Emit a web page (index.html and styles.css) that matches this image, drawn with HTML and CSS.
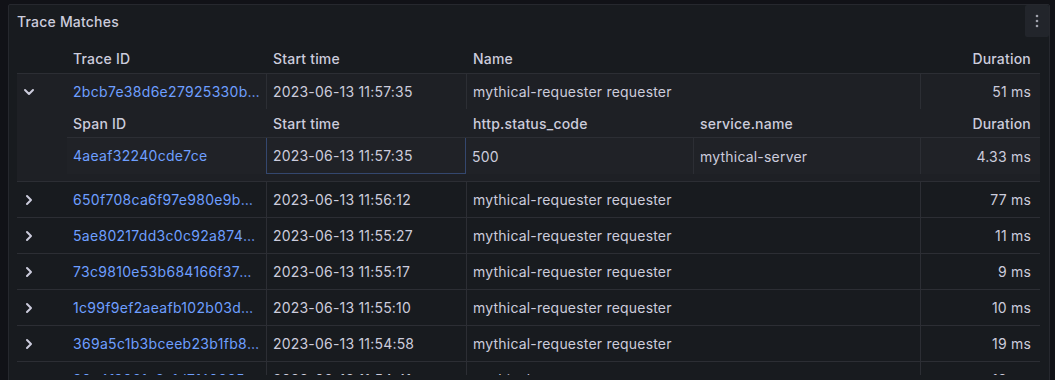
FILE: index.html
```html
<!DOCTYPE html>
<html lang="en">
<head>
  <meta charset="UTF-8">
  <title>Trace Matches</title>
  <link rel="stylesheet" href="styles.css">
</head>
<body>
  <div class="panel">
    <div class="panel-header">
      <h2 class="panel-title">Trace Matches</h2>
      <button class="panel-menu" title="Menu">
        <svg width="4" height="14" viewBox="0 0 4 14"><circle cx="2" cy="2" r="1.3"/><circle cx="2" cy="7" r="1.3"/><circle cx="2" cy="12" r="1.3"/></svg>
      </button>
    </div>

    <div class="panel-body">
      <div class="table">
        <div class="row head">
          <div class="cell"></div>
          <div class="cell">Trace ID</div>
          <div class="cell sep-blank">Start time</div>
          <div class="cell sep-blank">Name</div>
          <div class="cell sep-blank num">Duration</div>
        </div>

        <div class="trace expanded">
          <div class="row">
            <div class="cell toggle"><svg viewBox="0 0 16 16"><polyline points="4,6 8,10 12,6"/></svg></div>
            <div class="cell link">2bcb7e38d6e27925330bd4f1d9a1c02e</div>
            <div class="cell sep">2023-06-13 11:57:35</div>
            <div class="cell sep">mythical-requester requester</div>
            <div class="cell sep num">51 ms</div>
          </div>
          <div class="expansion">
            <div class="sub-row sub-head">
              <div class="cell">Span ID</div>
              <div class="cell sep-blank">Start time</div>
              <div class="cell sep-blank">http.status_code</div>
              <div class="cell sep-blank">service.name</div>
              <div class="cell sep-blank num">Duration</div>
            </div>
            <div class="sub-row">
              <div class="cell link">4aeaf32240cde7ce</div>
              <div class="cell focused">2023-06-13 11:57:35</div>
              <div class="cell">500</div>
              <div class="cell sep">mythical-server</div>
              <div class="cell sep num">4.33 ms</div>
            </div>
          </div>
        </div>

        <div class="trace">
          <div class="row">
            <div class="cell toggle"><svg viewBox="0 0 16 16"><polyline points="6,4 10,8 6,12"/></svg></div>
            <div class="cell link">650f708ca6f97e980e9bd2c41d07f35a</div>
            <div class="cell sep">2023-06-13 11:56:12</div>
            <div class="cell sep">mythical-requester requester</div>
            <div class="cell sep num">77 ms</div>
          </div>
        </div>

        <div class="trace">
          <div class="row">
            <div class="cell toggle"><svg viewBox="0 0 16 16"><polyline points="6,4 10,8 6,12"/></svg></div>
            <div class="cell link">5ae80217dd3c0c92a874d7e61b2f0c9d</div>
            <div class="cell sep">2023-06-13 11:55:27</div>
            <div class="cell sep">mythical-requester requester</div>
            <div class="cell sep num">11 ms</div>
          </div>
        </div>

        <div class="trace">
          <div class="row">
            <div class="cell toggle"><svg viewBox="0 0 16 16"><polyline points="6,4 10,8 6,12"/></svg></div>
            <div class="cell link">73c9810e53b684166f37d90b2d4e18c5</div>
            <div class="cell sep">2023-06-13 11:55:17</div>
            <div class="cell sep">mythical-requester requester</div>
            <div class="cell sep num">9 ms</div>
          </div>
        </div>

        <div class="trace">
          <div class="row">
            <div class="cell toggle"><svg viewBox="0 0 16 16"><polyline points="6,4 10,8 6,12"/></svg></div>
            <div class="cell link">1c99f9ef2aeafb102b03dd8e47c16a5f</div>
            <div class="cell sep">2023-06-13 11:55:10</div>
            <div class="cell sep">mythical-requester requester</div>
            <div class="cell sep num">10 ms</div>
          </div>
        </div>

        <div class="trace">
          <div class="row">
            <div class="cell toggle"><svg viewBox="0 0 16 16"><polyline points="6,4 10,8 6,12"/></svg></div>
            <div class="cell link">369a5c1b3bceeb23b1fb807d5e94c2a6</div>
            <div class="cell sep">2023-06-13 11:54:58</div>
            <div class="cell sep">mythical-requester requester</div>
            <div class="cell sep num">19 ms</div>
          </div>
        </div>

        <div class="trace">
          <div class="row">
            <div class="cell toggle"><svg viewBox="0 0 16 16"><polyline points="6,4 10,8 6,12"/></svg></div>
            <div class="cell link">90a4f3061c8a1d7f4083549b6e2c1d07</div>
            <div class="cell sep">2023-06-13 11:54:41</div>
            <div class="cell sep">mythical-requester requester</div>
            <div class="cell sep num">13 ms</div>
          </div>
        </div>
      </div>
    </div>
  </div>
</body>
</html>
```

FILE: styles.css
```css
html, body {
  margin: 0;
  padding: 0;
  height: 100%;
  overflow: hidden;
}

body {
  background: #111217;
  color: #ccccdc;
  font-family: Inter, "Noto Sans", sans-serif;
  font-size: 14px;
  letter-spacing: 0.2px;
}

.panel {
  margin: 4px 0 0 8px;
  width: 1040px;
  height: 420px;
  background: #181b1f;
  border: 1px solid #26282e;
  border-radius: 2px;
}

.panel-header {
  display: flex;
  align-items: center;
  justify-content: space-between;
  height: 32px;
  padding-left: 8px;
}

.panel-title {
  margin: 0;
  font-size: 14px;
  font-weight: 500;
  color: #ccccdc;
}

.panel-menu {
  width: 24px;
  height: 32px;
  padding: 0;
  display: flex;
  align-items: center;
  justify-content: center;
  background: #22252b;
  border: none;
  border-radius: 2px;
  cursor: pointer;
}

.panel-menu svg {
  fill: #9fa1ab;
}

.panel-body {
  padding: 7px 8px 0;
  height: 331px;
  overflow: hidden;
}

.table {
  width: 1023px;
}

.row {
  display: grid;
  grid-template-columns: 50px 199px 200px 454px 120px;
  height: 35px;
}

.row.head {
  height: 29px;
  border-bottom: 1px solid #2c2e34;
  font-weight: 500;
}

.cell {
  display: flex;
  align-items: center;
  padding: 0 6px;
  min-width: 0;
  white-space: nowrap;
  overflow: hidden;
}

.cell.link {
  display: block;
  line-height: 35px;
  letter-spacing: 0.3px;
  text-overflow: ellipsis;
  color: #6e9fff;
}

.cell.sep {
  border-left: 1px solid #2c2e34;
}

.cell.sep-blank {
  border-left: 1px solid transparent;
}

.cell.num {
  justify-content: flex-end;
  padding-right: 9px;
}

.cell.toggle {
  padding: 0 0 0 4px;
}

.toggle svg {
  width: 16px;
  height: 16px;
  fill: none;
  stroke: #ccccdc;
  stroke-width: 2;
  stroke-linecap: round;
  stroke-linejoin: round;
}

.trace {
  border-bottom: 1px solid #2c2e34;
}

.trace.expanded {
  background: #1e2025;
}

.expansion {
  padding: 0 0 7px 50px;
}

.sub-row {
  display: grid;
  grid-template-columns: 199px 200px 227px 227px 120px;
  height: 36px;
  background: #202227;
}

.sub-row.sub-head {
  height: 28px;
  border-bottom: 1px solid #2c2e34;
  background: #1e2025;
  font-weight: 500;
}

.sub-row .cell.link {
  line-height: 36px;
}

.cell.focused {
  border: 1px solid #34476e;
  border-top: none;
}
```
